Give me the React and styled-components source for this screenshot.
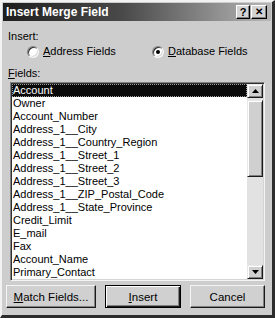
import React, { useState } from "react";
import styled, { createGlobalStyle } from "styled-components";

const GlobalStyle = createGlobalStyle`
  html, body {
    margin: 0;
    padding: 0;
    background: #cdcdcd;
  }
  * {
    box-sizing: border-box;
  }
`;

const fields = [
  "Account",
  "Owner",
  "Account_Number",
  "Address_1__City",
  "Address_1__Country_Region",
  "Address_1__Street_1",
  "Address_1__Street_2",
  "Address_1__Street_3",
  "Address_1__ZIP_Postal_Code",
  "Address_1__State_Province",
  "Credit_Limit",
  "E_mail",
  "Fax",
  "Account_Name",
  "Primary_Contact",
];

const App = () => {
  const [mode, setMode] = useState("database");
  const [selected, setSelected] = useState(0);

  return (
    <>
      <GlobalStyle />
      <Window>
        <TitleBar>
          <Title>Insert Merge Field</Title>
          <TitleButtons>
            <TitleButton>?</TitleButton>
            <TitleButton wide>✕</TitleButton>
          </TitleButtons>
        </TitleBar>

        <Body>
          <Label>Insert:</Label>
          <RadioRow>
            <RadioOption width={125} onClick={() => setMode("address")}>
              <RadioCircle checked={mode === "address"} />
              <span><u>A</u>ddress Fields</span>
            </RadioOption>
            <RadioOption onClick={() => setMode("database")}>
              <RadioCircle checked={mode === "database"} />
              <span><u>D</u>atabase Fields</span>
            </RadioOption>
          </RadioRow>

          <Label top={9}><u>F</u>ields:</Label>

          <ListBox>
            <Rows>
              {fields.map((f, i) => (
                <Row key={f} active={i === selected} onClick={() => setSelected(i)}>
                  {f}
                </Row>
              ))}
            </Rows>
            <ScrollBar>
              <ArrowButton>
                <svg width="7" height="4" viewBox="0 0 7 4">
                  <path d="M3.5 0 L7 4 L0 4 Z" fill="#000" />
                </svg>
              </ArrowButton>
              <Track height={2} />
              <Thumb />
              <Track />
              <ArrowButton>
                <svg width="7" height="4" viewBox="0 0 7 4">
                  <path d="M0 0 L7 0 L3.5 4 Z" fill="#000" />
                </svg>
              </ArrowButton>
            </ScrollBar>
          </ListBox>

          <ButtonRow>
            <Button width={90}><u>M</u>atch Fields...</Button>
            <Button width={76} isDefault><u>I</u>nsert</Button>
            <Button width={75}>Cancel</Button>
          </ButtonRow>
        </Body>
      </Window>
    </>
  );
};

const Window = styled.div`
  width: 275px;
  height: 318px;
  display: flex;
  flex-direction: column;
  background: #cdcdcd;
  border-top: 2px solid #f2f2f2;
  border-left: 2px solid #f2f2f2;
  border-right: 3px solid #2c2c2c;
  border-bottom: 3px solid #2c2c2c;
  padding: 1px 1px 2px 1px;
  font-family: Tahoma, "Liberation Sans", Arial, sans-serif;
  font-size: 11px;
  color: #000;
`;

const TitleBar = styled.div`
  height: 18px;
  flex: none;
  display: flex;
  align-items: center;
  justify-content: space-between;
  background: linear-gradient(to right, #1e1e1e 0%, #4a4a4a 45%, #b8b8b8 100%);
  padding: 0 4px 0 3px;
`;

const Title = styled.div`
  color: #fff;
  font-weight: bold;
  font-size: 12px;
  font-family: "Liberation Sans", Arial, sans-serif;
  line-height: 18px;
`;

const TitleButtons = styled.div`
  display: flex;
  gap: 1px;
`;

const TitleButton = styled.div`
  width: ${(p) => (p.wide ? 16 : 14)}px;
  height: 14px;
  background: #d4d4d4;
  border-top: 1px solid #fff;
  border-left: 1px solid #fff;
  border-right: 1px solid #000;
  border-bottom: 1px solid #000;
  box-shadow: inset -1px -1px 0 #808080;
  display: flex;
  align-items: center;
  justify-content: center;
  font-family: "Liberation Sans", Arial, sans-serif;
  font-weight: bold;
  font-size: ${(p) => (p.wide ? 10 : 11)}px;
  line-height: 1;
`;

const Body = styled.div`
  flex: 1;
  display: flex;
  flex-direction: column;
  padding: 0 6px 0 5px;
`;

const Label = styled.div`
  margin-top: ${(p) => p.top || 9}px;
  height: 13px;
  line-height: 13px;

  u {
    text-decoration: underline;
  }
`;

const RadioRow = styled.div`
  margin-top: 2px;
  margin-left: 19px;
  height: 13px;
  display: flex;
  align-items: center;
`;

const RadioOption = styled.label`
  display: flex;
  align-items: center;
  gap: 4px;
  width: ${(p) => (p.width ? `${p.width}px` : "auto")};
  line-height: 13px;
  cursor: default;
`;

const RadioCircle = styled.span`
  position: relative;
  width: 12px;
  height: 12px;
  border-radius: 50%;
  background: #fff;
  border: 1px solid;
  border-color: #808080 #f6f6f6 #f6f6f6 #808080;
  box-shadow: inset 1px 1px 0 #303030, inset -1px -1px 0 #d8d8d8;
  flex: none;

  &::after {
    content: "";
    display: ${(p) => (p.checked ? "block" : "none")};
    position: absolute;
    left: 3px;
    top: 3px;
    width: 4px;
    height: 4px;
    border-radius: 50%;
    background: #000;
  }
`;

const ListBox = styled.div`
  margin-top: 2px;
  margin-left: 2px;
  height: 199px;
  display: flex;
  background: #fff;
  border: 1px solid;
  border-color: #808080 #f4f4f4 #f4f4f4 #808080;
  box-shadow: inset 1px 1px 0 #303030, inset -1px -1px 0 #d4d4d4;
  padding: 1px;
`;

const Rows = styled.div`
  flex: 1;
  display: flex;
  flex-direction: column;
`;

const Row = styled.div`
  height: 13px;
  line-height: 13px;
  padding-left: 1px;
  white-space: nowrap;
  overflow: hidden;
  background: ${(p) => (p.active ? "#0a0a0a" : "transparent")};
  color: ${(p) => (p.active ? "#fff" : "#000")};
  outline: ${(p) => (p.active ? "1px dotted #9a9a9a" : "none")};
  outline-offset: -1px;
`;

const ScrollBar = styled.div`
  width: 16px;
  display: flex;
  flex-direction: column;
  background: #e4e4e4;
`;

const raised = `
  background: #d0d0d0;
  border-top: 1px solid #e8e8e8;
  border-left: 1px solid #e8e8e8;
  border-right: 1px solid #1a1a1a;
  border-bottom: 1px solid #1a1a1a;
  box-shadow: inset 1px 1px 0 #fff, inset -1px -1px 0 #808080;
`;

const ArrowButton = styled.div`
  height: 14px;
  flex: none;
  display: flex;
  align-items: center;
  justify-content: center;
  ${raised}
`;

const Thumb = styled.div`
  height: 77px;
  flex: none;
  ${raised}
`;

const Track = styled.div`
  flex: ${(p) => (p.height ? "none" : 1)};
  height: ${(p) => (p.height ? `${p.height}px` : "auto")};
  background: #e2e2e2;
`;

const ButtonRow = styled.div`
  margin-top: 4px;
  margin-left: -2px;
  display: flex;
  justify-content: space-between;
`;

const Button = styled.div`
  width: ${(p) => p.width}px;
  height: 23px;
  display: flex;
  align-items: center;
  justify-content: center;
  font-size: 11.5px;
  background: #d0d0d0;
  border: 1px solid;
  border-color: ${(p) => (p.isDefault ? "#000" : "#f4f4f4 #1a1a1a #1a1a1a #f4f4f4")};
  box-shadow: ${(p) =>
    p.isDefault
      ? "inset 1px 1px 0 #fff, inset -1px -1px 0 #1a1a1a, inset -2px -2px 0 #808080"
      : "inset -1px -1px 0 #808080"};
  cursor: default;
`;

export default App;
